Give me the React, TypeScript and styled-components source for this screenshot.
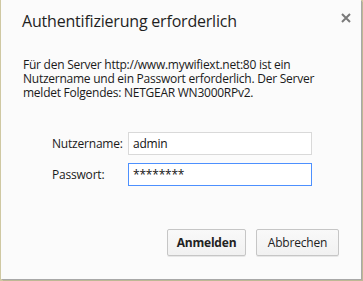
import React from "react";
import styled, { createGlobalStyle } from "styled-components";

const Global = createGlobalStyle`
  html, body { margin: 0; padding: 0; }
  body {
    background: #d6cfa8;
    font-family: "Open Sans", "Noto Sans", sans-serif;
    width: 363px;
    height: 281px;
    overflow: hidden;
  }
`;

const Backdrop = styled.div`
  width: 363px;
  height: 281px;
  display: flex;
  align-items: flex-start;
  padding-left: 1px;
  box-sizing: border-box;
  background: #cfc8a2;
`;

const Dialog = styled.div`
  width: 360px;
  height: 279px;
  background: #fbfbfb;
  box-shadow: 1px 1px 0 #a8a8a8, 2px 2px 0 rgba(0, 0, 0, 0.08);
  display: flex;
  flex-direction: column;
  box-sizing: border-box;
  padding: 0 22px 23px 21px;
  color: #222;
`;

const Header = styled.div`
  display: flex;
  justify-content: space-between;
  align-items: flex-start;
  padding-top: 10px;
  margin-right: -14px;
`;

const Title = styled.h1`
  margin: 0;
  font-size: 16px;
  font-weight: 400;
  line-height: 22px;
  color: #1f1f1f;
  letter-spacing: -0.2px;
`;

const Close = styled.button`
  border: 0;
  background: transparent;
  padding: 0;
  margin-top: 1px;
  width: 14px;
  height: 14px;
  display: flex;
  align-items: center;
  justify-content: center;
  cursor: pointer;
`;

const Message = styled.div`
  margin: 26px 0 0 1px;
  display: flex;
  flex-direction: column;
`;

const Line = styled.span`
  display: block;
  height: 14px;
  font-size: 12px;
  line-height: 14px;
  color: #1a1a1a;
  letter-spacing: -0.25px;
  white-space: nowrap;
`;

const Form = styled.div`
  display: grid;
  grid-template-columns: 76px 184px;
  row-gap: 8px;
  margin: 32px 0 0 30px;
  align-items: center;
`;

const Label = styled.label`
  font-size: 12px;
  color: #1a1a1a;
  letter-spacing: -0.2px;
`;

const Input = styled.input<{ $focused?: boolean }>`
  box-sizing: border-box;
  height: 23px;
  width: 184px;
  margin: 0;
  padding: 0 4px;
  font-family: "Open Sans", "Noto Sans", sans-serif;
  font-size: 12px;
  color: #111;
  background: #fff;
  border: 1px solid ${(p) => (p.$focused ? "#4d90fe" : "#d9d9d9")};
  outline: none;
  letter-spacing: -0.2px;
`;

const Footer = styled.div`
  margin-top: auto;
  display: flex;
  justify-content: flex-end;
  gap: 10px;
`;

const Button = styled.button<{ $primary?: boolean; $w: number }>`
  box-sizing: border-box;
  height: 27px;
  width: ${(p) => p.$w}px;
  padding: 0;
  font-family: "Open Sans", "Noto Sans", sans-serif;
  font-size: 12px;
  font-weight: ${(p) => (p.$primary ? 700 : 400)};
  color: #222;
  letter-spacing: -0.2px;
  background: linear-gradient(#f9f9f9, #f1f1f1);
  border: 1px solid #c6c6c6;
  border-radius: 2px;
  box-shadow: 0 1px 0 rgba(0, 0, 0, 0.08);
`;

export default function App() {
  return (
    <>
      <Global />
      <Backdrop>
        <Dialog>
          <Header>
            <Title>Authentifizierung erforderlich</Title>
            <Close aria-label="Schließen">
              <svg width="10" height="10" viewBox="0 0 10 10">
                <path d="M1 1L9 9M9 1L1 9" stroke="#7a7a7a" strokeWidth="2" />
              </svg>
            </Close>
          </Header>
          <Message>
            <Line>Für den Server http://www.mywifiext.net:80 ist ein</Line>
            <Line>Nutzername und ein Passwort erforderlich. Der Server</Line>
            <Line>meldet Folgendes: NETGEAR WN3000RPv2.</Line>
          </Message>
          <Form>
            <Label>Nutzername:</Label>
            <Input defaultValue="admin" />
            <Label>Passwort:</Label>
            <Input defaultValue="********" readOnly $focused />
          </Form>
          <Footer>
            <Button $primary $w={79}>Anmelden</Button>
            <Button $w={83}>Abbrechen</Button>
          </Footer>
        </Dialog>
      </Backdrop>
    </>
  );
}
